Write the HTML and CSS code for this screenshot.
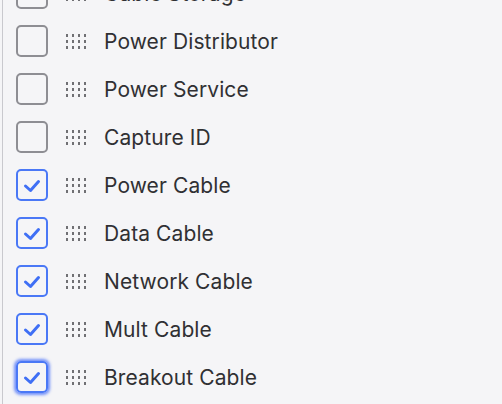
FILE: index.html
```html
<!DOCTYPE html>
<html>
<head>
<meta charset="utf-8">
<link rel="stylesheet" href="styles.css">
</head>
<body>
<div class="panel">
  <ul class="list">
    <li class="row"><span class="box"></span><span class="grip"><i></i><i></i><i></i><i></i><i></i><i></i><i></i><i></i><i></i><i></i><i></i><i></i></span><span class="label">Cable Storage</span></li>
    <li class="row"><span class="box"></span><span class="grip"><i></i><i></i><i></i><i></i><i></i><i></i><i></i><i></i><i></i><i></i><i></i><i></i></span><span class="label">Power Distributor</span></li>
    <li class="row"><span class="box"></span><span class="grip"><i></i><i></i><i></i><i></i><i></i><i></i><i></i><i></i><i></i><i></i><i></i><i></i></span><span class="label">Power Service</span></li>
    <li class="row"><span class="box"></span><span class="grip"><i></i><i></i><i></i><i></i><i></i><i></i><i></i><i></i><i></i><i></i><i></i><i></i></span><span class="label">Capture ID</span></li>
    <li class="row"><span class="box checked"><svg viewBox="0 0 28 28" width="28" height="28"><path d="M7.5 15 L12.5 19.5 L20.5 10.5" fill="none" stroke="#3f6ff5" stroke-width="3" stroke-linecap="round" stroke-linejoin="round"/></svg></span><span class="grip"><i></i><i></i><i></i><i></i><i></i><i></i><i></i><i></i><i></i><i></i><i></i><i></i></span><span class="label">Power Cable</span></li>
    <li class="row"><span class="box checked"><svg viewBox="0 0 28 28" width="28" height="28"><path d="M7.5 15 L12.5 19.5 L20.5 10.5" fill="none" stroke="#3f6ff5" stroke-width="3" stroke-linecap="round" stroke-linejoin="round"/></svg></span><span class="grip"><i></i><i></i><i></i><i></i><i></i><i></i><i></i><i></i><i></i><i></i><i></i><i></i></span><span class="label">Data Cable</span></li>
    <li class="row"><span class="box checked"><svg viewBox="0 0 28 28" width="28" height="28"><path d="M7.5 15 L12.5 19.5 L20.5 10.5" fill="none" stroke="#3f6ff5" stroke-width="3" stroke-linecap="round" stroke-linejoin="round"/></svg></span><span class="grip"><i></i><i></i><i></i><i></i><i></i><i></i><i></i><i></i><i></i><i></i><i></i><i></i></span><span class="label">Network Cable</span></li>
    <li class="row"><span class="box checked"><svg viewBox="0 0 28 28" width="28" height="28"><path d="M7.5 15 L12.5 19.5 L20.5 10.5" fill="none" stroke="#3f6ff5" stroke-width="3" stroke-linecap="round" stroke-linejoin="round"/></svg></span><span class="grip"><i></i><i></i><i></i><i></i><i></i><i></i><i></i><i></i><i></i><i></i><i></i><i></i></span><span class="label">Mult Cable</span></li>
    <li class="row"><span class="box checked focus"><svg viewBox="0 0 28 28" width="28" height="28"><path d="M7.5 15 L12.5 19.5 L20.5 10.5" fill="none" stroke="#3f6ff5" stroke-width="3" stroke-linecap="round" stroke-linejoin="round"/></svg></span><span class="grip"><i></i><i></i><i></i><i></i><i></i><i></i><i></i><i></i><i></i><i></i><i></i><i></i></span><span class="label">Breakout Cable</span></li>
  </ul>
</div>
</body>
</html>
```
FILE: styles.css
```css
html, body {
  margin: 0;
  padding: 0;
  background: #f5f5f7;
  height: 100%;
  overflow: hidden;
}
.panel {
  margin-left: 2px;
  border-left: 1px solid #c9c9ce;
  height: 100%;
  overflow: hidden;
}
.list {
  list-style: none;
  margin: -31px 0 0 0;
  padding: 0 0 0 13px;
}
.row {
  height: 48px;
  display: flex;
  align-items: center;
  font-family: Inter, "Noto Sans", sans-serif;
  font-size: 21px;
  letter-spacing: 0.1px;
  color: #303033;
}
.box {
  width: 32px;
  height: 32px;
  box-sizing: border-box;
  border: 2px solid #8e8e93;
  border-radius: 5px;
  display: flex;
  align-items: center;
  justify-content: center;
  flex-shrink: 0;
}
.box.checked {
  border-color: #4a78f6;
}
.box.focus {
  box-shadow: 0 0 3px 2px rgba(70, 110, 250, 0.75);
}
.grip {
  margin-left: 18px;
  display: grid;
  grid-template-columns: repeat(4, 2px);
  grid-template-rows: repeat(3, 3px);
  column-gap: 4px;
  row-gap: 3px;
}
.grip i {
  display: block;
  background: #707074;
}
.label {
  margin-left: 18px;
}
```
